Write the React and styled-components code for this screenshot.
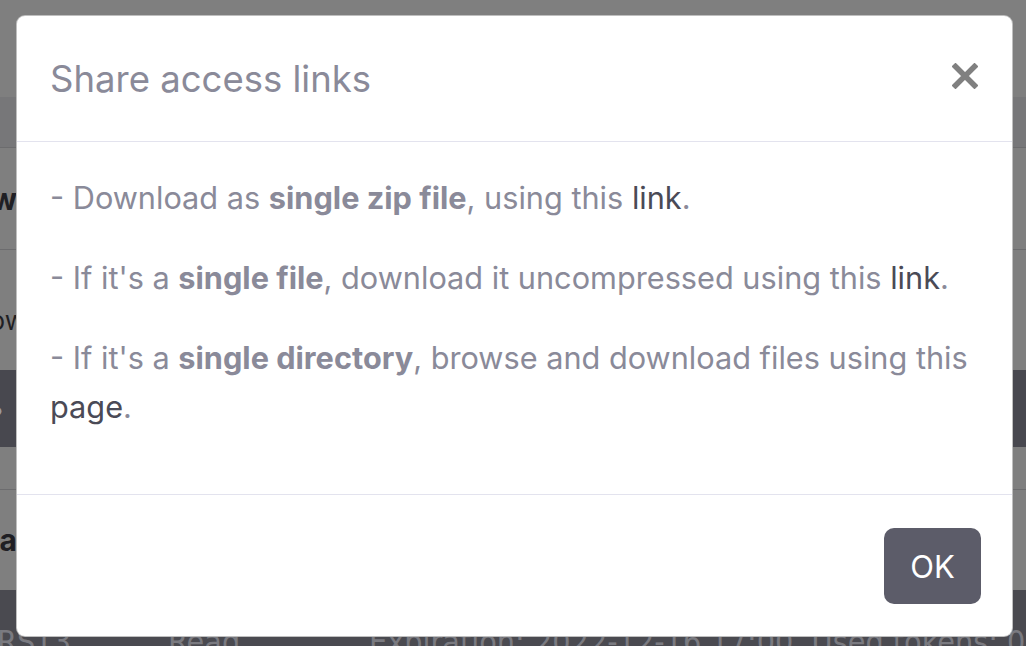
import React from "react";
import styled, { createGlobalStyle } from "styled-components";

const Global = createGlobalStyle`
  html, body { margin: 0; padding: 0; }
  body {
    width: 1026px;
    height: 646px;
    overflow: hidden;
    font-family: Inter, "Noto Sans", "Liberation Sans", sans-serif;
    background: #7f7f7f;
  }
`;

const Page = styled.div`
  position: relative;
  width: 1026px;
  height: 646px;
  overflow: hidden;
  display: flex;
  flex-direction: column;
  background: #7f7f7f;
`;

const Band = styled.div`
  height: ${(p) => p.$h}px;
  box-sizing: border-box;
  flex: none;
  background: ${(p) => p.$bg || "#7f7f7f"};
  border-bottom: ${(p) => (p.$line ? "1px solid #6c6c6e" : "none")};
  display: flex;
  align-items: center;
  padding-top: ${(p) => p.$pt || 0}px;
  overflow: hidden;
  white-space: nowrap;
  font-size: ${(p) => p.$fs || 30}px;
  font-weight: ${(p) => (p.$bold ? 700 : 400)};
  color: ${(p) => p.$color || "#1f1f24"};
`;

const Edge = styled.span`
  width: 17px;
  flex: none;
  display: flex;
  justify-content: flex-end;
  overflow: hidden;
`;

const EdgeText = styled.span`
  flex: none;
  margin-right: ${(p) => p.$mr || 0}px;
`;

const BottomRow = styled.div`
  flex: 1;
  background: #4a4a50;
  display: flex;
  align-items: flex-start;
  padding-top: 33px;
  font-family: "DejaVu Sans Condensed", "DejaVu Sans", sans-serif;
  font-size: 32px;
  color: #7a7a80;
  white-space: nowrap;
  overflow: hidden;
`;

const Cell = styled.span`
  width: ${(p) => p.$w}px;
  flex: none;
  margin-left: ${(p) => p.$ml || 0}px;
`;

const Modal = styled.div`
  position: absolute;
  left: 16px;
  top: 15px;
  width: 997px;
  height: 622px;
  box-sizing: border-box;
  background: #fff;
  border: 1px solid rgba(0, 0, 0, 0.25);
  border-radius: 9px;
  display: flex;
  flex-direction: column;
  overflow: hidden;
`;

const Header = styled.div`
  height: 126px;
  flex: none;
  box-sizing: border-box;
  display: flex;
  align-items: center;
  justify-content: space-between;
  padding: 0 33px 0 33px;
  border-bottom: 1.5px solid #e3e3ee;
`;

const Title = styled.h5`
  margin: 0;
  font-size: 36.5px;
  font-weight: 400;
  color: #8a8a99;
  letter-spacing: 0;
`;

const Close = styled.button`
  border: 0;
  background: none;
  padding: 0;
  width: 28px;
  height: 28px;
  display: flex;
  align-items: center;
  justify-content: center;
  cursor: pointer;
  margin-top: -6px;
`;

const Body = styled.div`
  padding: 31px 33px 32px;
  flex: none;
  height: 353px;
  box-sizing: border-box;
  border-bottom: 1.5px solid #e3e3ee;
`;

const Para = styled.p`
  margin: 0 0 31px;
  font-size: 30.7px;
  line-height: 49px;
  color: #8a8a99;
`;

const Strong = styled.b`
  font-weight: 700;
`;

const Link = styled.a`
  color: #4a4a56;
  text-decoration: none;
`;

const Footer = styled.div`
  flex: 1;
  display: flex;
  justify-content: flex-end;
  align-items: flex-start;
  padding: 33px 31px 0 0;
`;

const OkButton = styled.button`
  width: 97px;
  height: 76px;
  border: 0;
  border-radius: 10px;
  background: #5c5c69;
  color: #fff;
  font-family: Inter, "Noto Sans", sans-serif;
  font-size: 31px;
  font-weight: 400;
  cursor: pointer;
`;

export default function App() {
  return (
    <>
      <Global />
      <Page>
        <Band $h={97} />
        <Band $h={51} $bg="#777779" $line />
        <Band $h={102} $line $bold>
          <Edge>
            <EdgeText>Show</EdgeText>
          </Edge>
        </Band>
        <Band $h={120} $pt={20} $fs={26}>
          <Edge>
            <EdgeText $mr={-9}>Now</EdgeText>
          </Edge>
        </Band>
        <Band $h={77} $bg="#48484f" $color="#9a9aa0">
          <Edge>
            <EdgeText $mr={12}>•</EdgeText>
          </Edge>
        </Band>
        <Band $h={43} $line />
        <Band $h={100} $bold>
          <Edge>
            <EdgeText>Data</EdgeText>
          </Edge>
        </Band>
        <BottomRow>
          <Cell $w={171} $ml={-3}>RST3</Cell>
          <Cell $w={201}>Read</Cell>
          <Cell $w={700}>Expiration: 2022-12-16 17:00, Used tokens: 0</Cell>
        </BottomRow>
        <Modal>
          <Header>
            <Title>Share access links</Title>
            <Close aria-label="Close">
              <svg width="26" height="26" viewBox="0 0 26 26">
                <path d="M3.5 3.5 L22.5 22.5 M22.5 3.5 L3.5 22.5" stroke="#808080" strokeWidth="5.5" strokeLinecap="square" />
              </svg>
            </Close>
          </Header>
          <Body>
            <Para>
              - Download as <Strong>single zip file</Strong>, using this <Link href="#">link</Link>.
            </Para>
            <Para>
              - If it's a <Strong>single file</Strong>, download it uncompressed using this <Link href="#">link</Link>.
            </Para>
            <Para>
              - If it's a <Strong>single directory</Strong>, browse and download files using this <Link href="#">page</Link>.
            </Para>
          </Body>
          <Footer>
            <OkButton>OK</OkButton>
          </Footer>
        </Modal>
      </Page>
    </>
  );
}
